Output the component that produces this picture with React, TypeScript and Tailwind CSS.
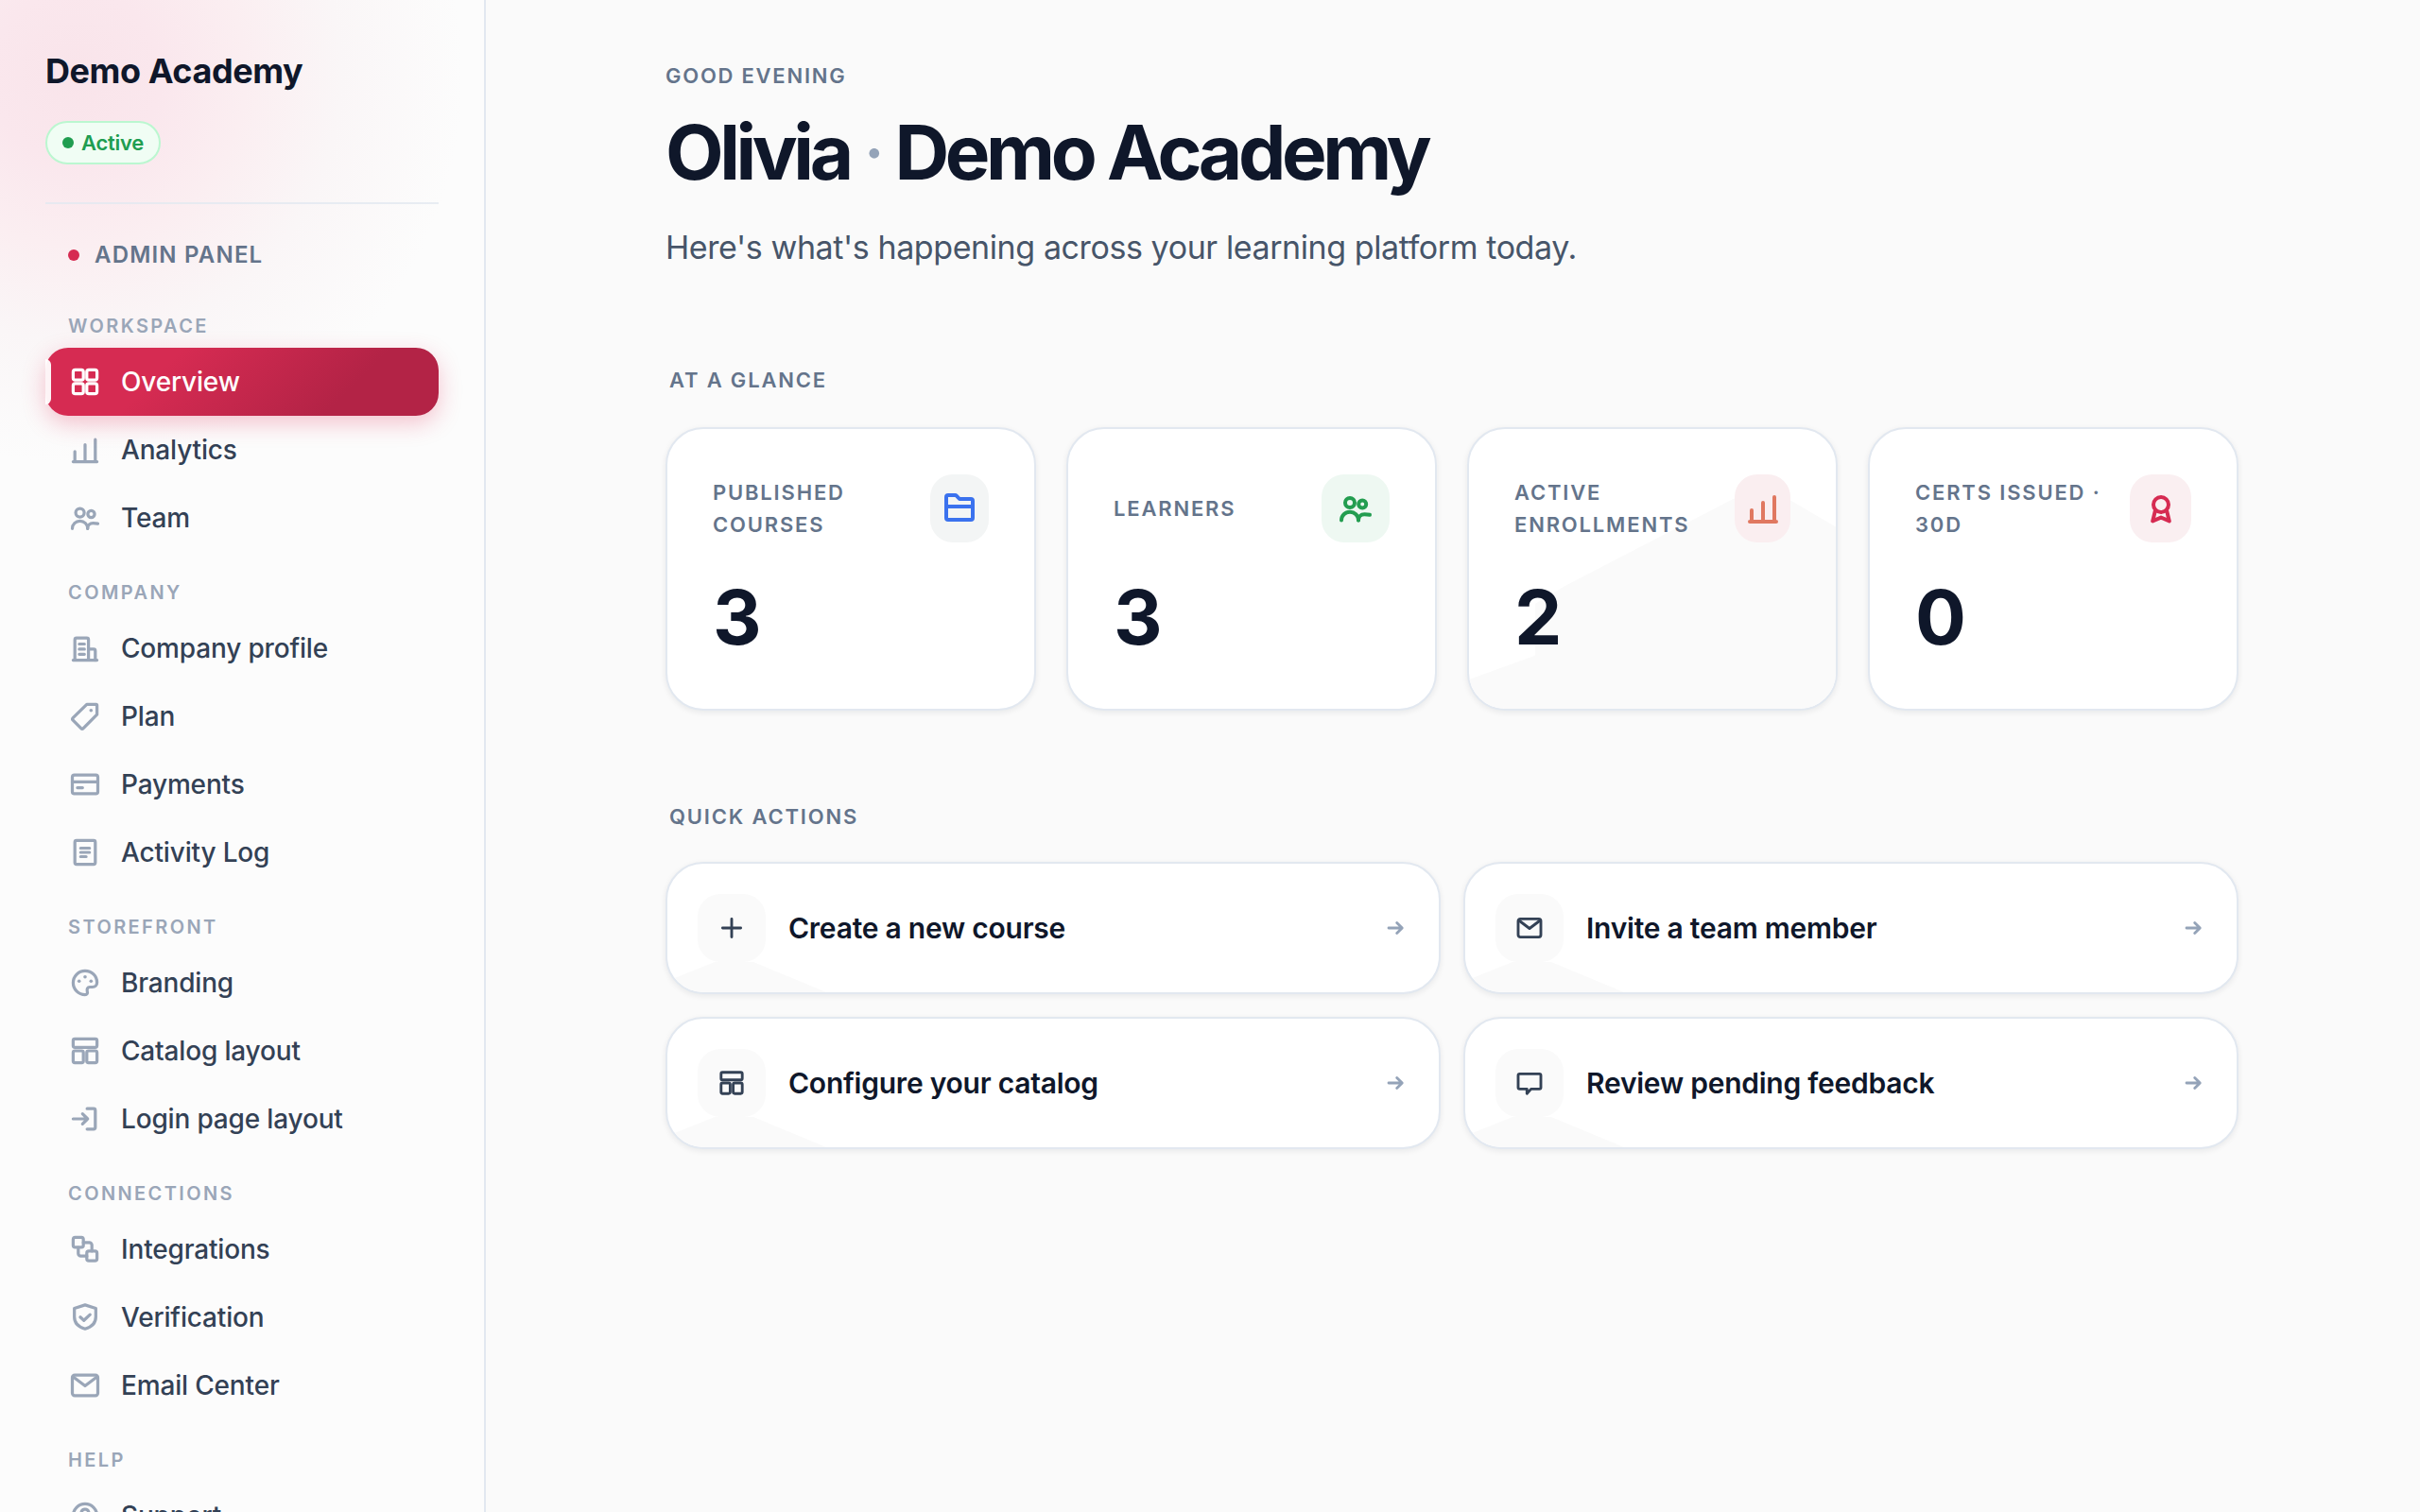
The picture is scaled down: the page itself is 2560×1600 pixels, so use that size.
import type { ReactNode } from "react";

type IconProps = { name: IconName; className?: string; stroke?: number };

const icons = {
  grid: (
    <>
      <rect x="3" y="3" width="6" height="6" rx="1.2" />
      <rect x="11" y="3" width="6" height="6" rx="1.2" />
      <rect x="3" y="11" width="6" height="6" rx="1.2" />
      <rect x="11" y="11" width="6" height="6" rx="1.2" />
    </>
  ),
  chart: <path d="M3 17h14M4 17v-6M10 17V7M16 17V4" />,
  users: (
    <>
      <circle cx="7" cy="7" r="2.5" />
      <circle cx="13.6" cy="7.8" r="2" />
      <path d="M2.5 16.3c0-2.6 2-4.4 4.5-4.4s4.5 1.8 4.5 4.4" />
      <path d="M11.5 16.3c0-1.9 1.3-3.2 3.2-3.2 1.1 0 2 .1 2.8.3" />
    </>
  ),
  building: (
    <>
      <path d="M3 17h14M4 17V5a1 1 0 0 1 1-1h6a1 1 0 0 1 1 1v12" />
      <path d="M12 10.5h3a1 1 0 0 1 1 1V17M6.6 7.5h3M6.6 10.5h3M6.6 13.5h3" />
    </>
  ),
  tag: (
    <>
      <path d="M11 3h5.5a.5.5 0 0 1 .5.5V9l-8 8a1 1 0 0 1-1.4 0l-4.7-4.7a1 1 0 0 1 0-1.4z" />
      <circle cx="13.5" cy="6.5" r="1" fill="currentColor" stroke="none" />
    </>
  ),
  card: (
    <>
      <rect x="2.5" y="4.5" width="15" height="11" rx="1.2" />
      <path d="M2.5 8.5h15M5.5 12h3" />
    </>
  ),
  log: (
    <>
      <rect x="4" y="3" width="12" height="14" rx="1" />
      <path d="M7.4 7.5h5.2M7.4 10h5.2M7.4 12.5h3.2" />
    </>
  ),
  palette: (
    <>
      <path d="M10 3a7 7 0 0 0 0 14c1.1 0 1.6-.8 1.3-1.8-.4-1.4.1-2.7 1.5-2.7h1.5c1.6 0 2.7-1.1 2.7-2.7C17 6 13.9 3 10 3z" />
      <g fill="currentColor" stroke="none">
        <circle cx="6.5" cy="9" r="1" />
        <circle cx="10" cy="6.5" r="1" />
        <circle cx="13.5" cy="9" r="1" />
      </g>
    </>
  ),
  layout: (
    <>
      <rect x="3" y="3" width="14" height="5" rx="1" />
      <rect x="3" y="10" width="6" height="7" rx="1" />
      <rect x="11" y="10" width="6" height="7" rx="1" />
    </>
  ),
  login: (
    <>
      <path d="M11.2 4H15a1 1 0 0 1 1 1v10a1 1 0 0 1-1 1h-3.8" />
      <path d="M3 10h8.5M8.5 7l3 3-3 3" />
    </>
  ),
  nodes: (
    <>
      <rect x="3" y="3" width="6" height="5.8" rx="1.2" />
      <rect x="11" y="11" width="6" height="5.8" rx="1.2" />
      <path d="M9 6h3.5A1.5 1.5 0 0 1 14 7.5V11M6 9v3.5A1.5 1.5 0 0 0 7.5 14H11" />
    </>
  ),
  shield: (
    <>
      <path d="M10 2.7 16.3 4.7v5c0 3.6-2.5 6-6.3 7.1-3.8-1.1-6.3-3.5-6.3-7.1v-5z" />
      <path d="m7.2 9.9 2.1 1.9 3.6-3.4" />
    </>
  ),
  mail: (
    <>
      <rect x="2.5" y="4" width="15" height="12" rx="1.4" />
      <path d="m3 5 7 5.3L17 5" />
    </>
  ),
  help: (
    <>
      <circle cx="10" cy="10" r="7" />
      <path d="M7.8 8.4a2.2 2.2 0 1 1 3.3 1.9c-.8.4-1.1.9-1.1 1.6" />
      <circle cx="10" cy="14" r="0.9" fill="currentColor" stroke="none" />
    </>
  ),
  folder: (
    <>
      <path d="M3 4a1 1 0 0 1 1-1h3.7a1 1 0 0 1 .7.3L10 5h6a1 1 0 0 1 1 1v9a1 1 0 0 1-1 1H4a1 1 0 0 1-1-1z" />
      <path d="M3 9h14" />
    </>
  ),
  award: (
    <>
      <circle cx="10" cy="8" r="4" />
      <path d="M7 11 5.6 16.7l4.4-1.9 4.4 1.9L13 11" />
    </>
  ),
  plus: <path d="M10 4v12M4 10h12" />,
  chat: <path d="M3.5 4h13a1 1 0 0 1 1 1v8a1 1 0 0 1-1 1H11l-2.7 3v-3H3.5a1 1 0 0 1-1-1V5a1 1 0 0 1 1-1z" />,
  arrow: <path d="M5 10h10M11.2 6l4 4-4 4" />,
} satisfies Record<string, ReactNode>;

type IconName = keyof typeof icons;

function Icon({ name, className, stroke = 1.8 }: IconProps) {
  return (
    <svg
      viewBox="0 0 20 20"
      fill="none"
      stroke="currentColor"
      strokeWidth={stroke}
      strokeLinecap="round"
      strokeLinejoin="round"
      aria-hidden="true"
      className={className}
    >
      {icons[name]}
    </svg>
  );
}

const sections: { title: string; items: { label: string; icon: IconName; active?: boolean }[] }[] = [
  {
    title: "Workspace",
    items: [
      { label: "Overview", icon: "grid", active: true },
      { label: "Analytics", icon: "chart" },
      { label: "Team", icon: "users" },
    ],
  },
  {
    title: "Company",
    items: [
      { label: "Company profile", icon: "building" },
      { label: "Plan", icon: "tag" },
      { label: "Payments", icon: "card" },
      { label: "Activity Log", icon: "log" },
    ],
  },
  {
    title: "Storefront",
    items: [
      { label: "Branding", icon: "palette" },
      { label: "Catalog layout", icon: "layout" },
      { label: "Login page layout", icon: "login" },
    ],
  },
  {
    title: "Connections",
    items: [
      { label: "Integrations", icon: "nodes" },
      { label: "Verification", icon: "shield" },
      { label: "Email Center", icon: "mail" },
    ],
  },
  { title: "Help", items: [{ label: "Support", icon: "help" }] },
];

function Sidebar() {
  return (
    <aside className="relative z-10 h-screen w-[512px] shrink-0 overflow-hidden bg-[#fcfcfc] bg-[radial-gradient(circle_at_80px_80px,#f9e4ea_0px,#fae7ed_90px,#fbeef1_180px,#faf6f7_280px,#fcfcfc_410px)] px-12 pt-12 shadow-[2px_0_0_#e2e8f0]">
      <p className="text-[36px] leading-[54px] font-bold tracking-[-0.012em] text-[#0f172a]">Demo Academy</p>
      <div className="mt-[26px] inline-flex h-[46px] items-center gap-2 rounded-full border-2 border-[#bbf7d0] bg-[#f0fdf4] px-4 text-[22px] font-semibold tracking-[-0.012em] text-[#209d50]">
        <span className="size-3 rounded-full bg-[#209d50]" />
        Active
      </div>
      <hr className="mt-10 border-t-2 border-[#e2e8f0]/80" />
      <div className="mt-8 mb-2.5 flex h-11 items-center gap-4 px-6 text-[24px] font-semibold tracking-[0.05em] text-[#64748b]">
        <span className="size-3 rounded-full bg-[#d62b52]" />
        ADMIN PANEL
      </div>
      <nav aria-label="Admin">
        {sections.map((section) => (
          <section key={section.title}>
            <h2 className="px-6 pt-7 pb-2 text-[20px] leading-[30px] font-semibold tracking-[0.12em] text-[#9aa6b8] uppercase">
              {section.title}
            </h2>
            <ul>
              {section.items.map((item) => (
                <li key={item.label}>
                  {item.active ? (
                    <a
                      href="#"
                      aria-current="page"
                      className="relative flex h-[72px] items-center gap-5 rounded-[24px] bg-[linear-gradient(135deg,#d62b52_0%,#d62b52_30%,#b32346_75%,#b32346_100%)] px-6 text-[28px] font-medium tracking-[-0.006em] text-white shadow-[0_8px_24px_rgba(225,29,72,0.25)]"
                    >
                      <span className="absolute top-3 left-0 h-12 w-1.5 rounded-r-md bg-white/95" />
                      <Icon name={item.icon} className="size-9" />
                      {item.label}
                    </a>
                  ) : (
                    <a
                      href="#"
                      className="flex h-[72px] items-center gap-5 px-6 text-[28px] font-medium tracking-[-0.006em] text-[#334155]"
                    >
                      <Icon name={item.icon} className="size-9 text-[#9aa6b8]" />
                      {item.label}
                    </a>
                  )}
                </li>
              ))}
            </ul>
          </section>
        ))}
      </nav>
    </aside>
  );
}

const stats: { label: string; value: number; icon: IconName; tone: string; facet?: boolean }[] = [
  { label: "Published courses", value: 3, icon: "folder", tone: "bg-[#f3f5f5] text-[#3b72ee]" },
  { label: "Learners", value: 3, icon: "users", tone: "bg-[#eef8f2] text-[#239d50]" },
  { label: "Active enrollments", value: 2, icon: "chart", tone: "bg-[#faeef0] text-[#e07860]", facet: true },
  { label: "Certs issued · 30d", value: 0, icon: "award", tone: "bg-[#faeff1] text-[#d62b52]" },
];

const actions: { label: string; icon: IconName }[] = [
  { label: "Create a new course", icon: "plus" },
  { label: "Invite a team member", icon: "mail" },
  { label: "Configure your catalog", icon: "layout" },
  { label: "Review pending feedback", icon: "chat" },
];

export default function App() {
  return (
    <div className="flex h-screen overflow-hidden bg-[#fafafa] font-['Inter',sans-serif] text-[#0f172a]">
      <Sidebar />
      <main className="min-w-0 flex-1 px-24 pt-16">
        <div className="mx-auto max-w-[1664px]">
          <header>
            <p className="text-[22px] leading-8 font-semibold tracking-[0.08em] text-[#64748b] uppercase">Good evening</p>
            <h1 className="mt-5 text-[80px] leading-[90px] font-bold tracking-[-0.055em]">
              Olivia <span className="font-normal text-[#94a3b8]">·</span> Demo Academy
            </h1>
            <p className="mt-7 text-[34px] leading-[56px] tracking-[-0.012em] text-[#475569]">
              Here's what's happening across your learning platform today.
            </p>
          </header>

          <section className="mt-24">
            <h2 className="px-1 text-[22px] leading-8 font-semibold tracking-[0.083em] text-[#64748b] uppercase">
              At a glance
            </h2>
            <div className="mt-[34px] grid grid-cols-4 gap-8">
              {stats.map((s) => (
                <article
                  key={s.label}
                  className="relative overflow-hidden rounded-[40px] border-2 border-[#e2e8f0] bg-white p-12 shadow-[0_2px_6px_rgba(15,23,42,0.08)]"
                >
                  {s.facet && (
                    <span className="absolute inset-0 bg-[#fafafa] [clip-path:polygon(0%_89.5%,18%_81%,18%_62.5%,26.3%_56%,72%_25%,80%_20.5%,87%_25%,100%_35%,100%_100%,0%_100%)]" />
                  )}
                  <div className="relative flex items-center justify-between">
                    <h3 className="text-[22px] leading-[34px] font-semibold tracking-[0.083em] text-[#64748b] uppercase">
                      {s.label}
                    </h3>
                    <span className={`flex h-[72px] w-[72px] items-center justify-center rounded-[24px] ${s.tone}`}>
                      <Icon name={s.icon} stroke={2} className="size-10 shrink-0" />
                    </span>
                  </div>
                  <p className="relative mt-[30px] text-[80px] leading-[98px] font-bold tracking-[-0.02em]">{s.value}</p>
                </article>
              ))}
            </div>
          </section>

          <section className="mt-24">
            <h2 className="px-1 text-[22px] leading-8 font-semibold tracking-[0.083em] text-[#64748b] uppercase">
              Quick actions
            </h2>
            <div className="mt-8 grid grid-cols-2 gap-6">
              {actions.map((a) => (
                <a
                  key={a.label}
                  href="#"
                  className="relative flex items-center gap-6 overflow-hidden rounded-[40px] border-2 border-[#e2e8f0] bg-white p-8 shadow-[0_2px_6px_rgba(15,23,42,0.08)]"
                >
                  <span className="absolute bottom-0 left-0 h-8 w-[168px] bg-[#fafafa] [clip-path:polygon(0_20px,50px_0,91px_0,100%_100%,0_100%)]" />
                  <span className="flex size-[72px] items-center justify-center rounded-[24px] bg-[#fafafa] text-[#334155]">
                    <Icon name={a.icon} className="size-8" />
                  </span>
                  <span className="flex-1 text-[30px] leading-[44px] font-semibold tracking-[-0.008em]">{a.label}</span>
                  <Icon name="arrow" stroke={2} className="size-7 text-[#94a3b8]" />
                </a>
              ))}
            </div>
          </section>
        </div>
      </main>
    </div>
  );
}
